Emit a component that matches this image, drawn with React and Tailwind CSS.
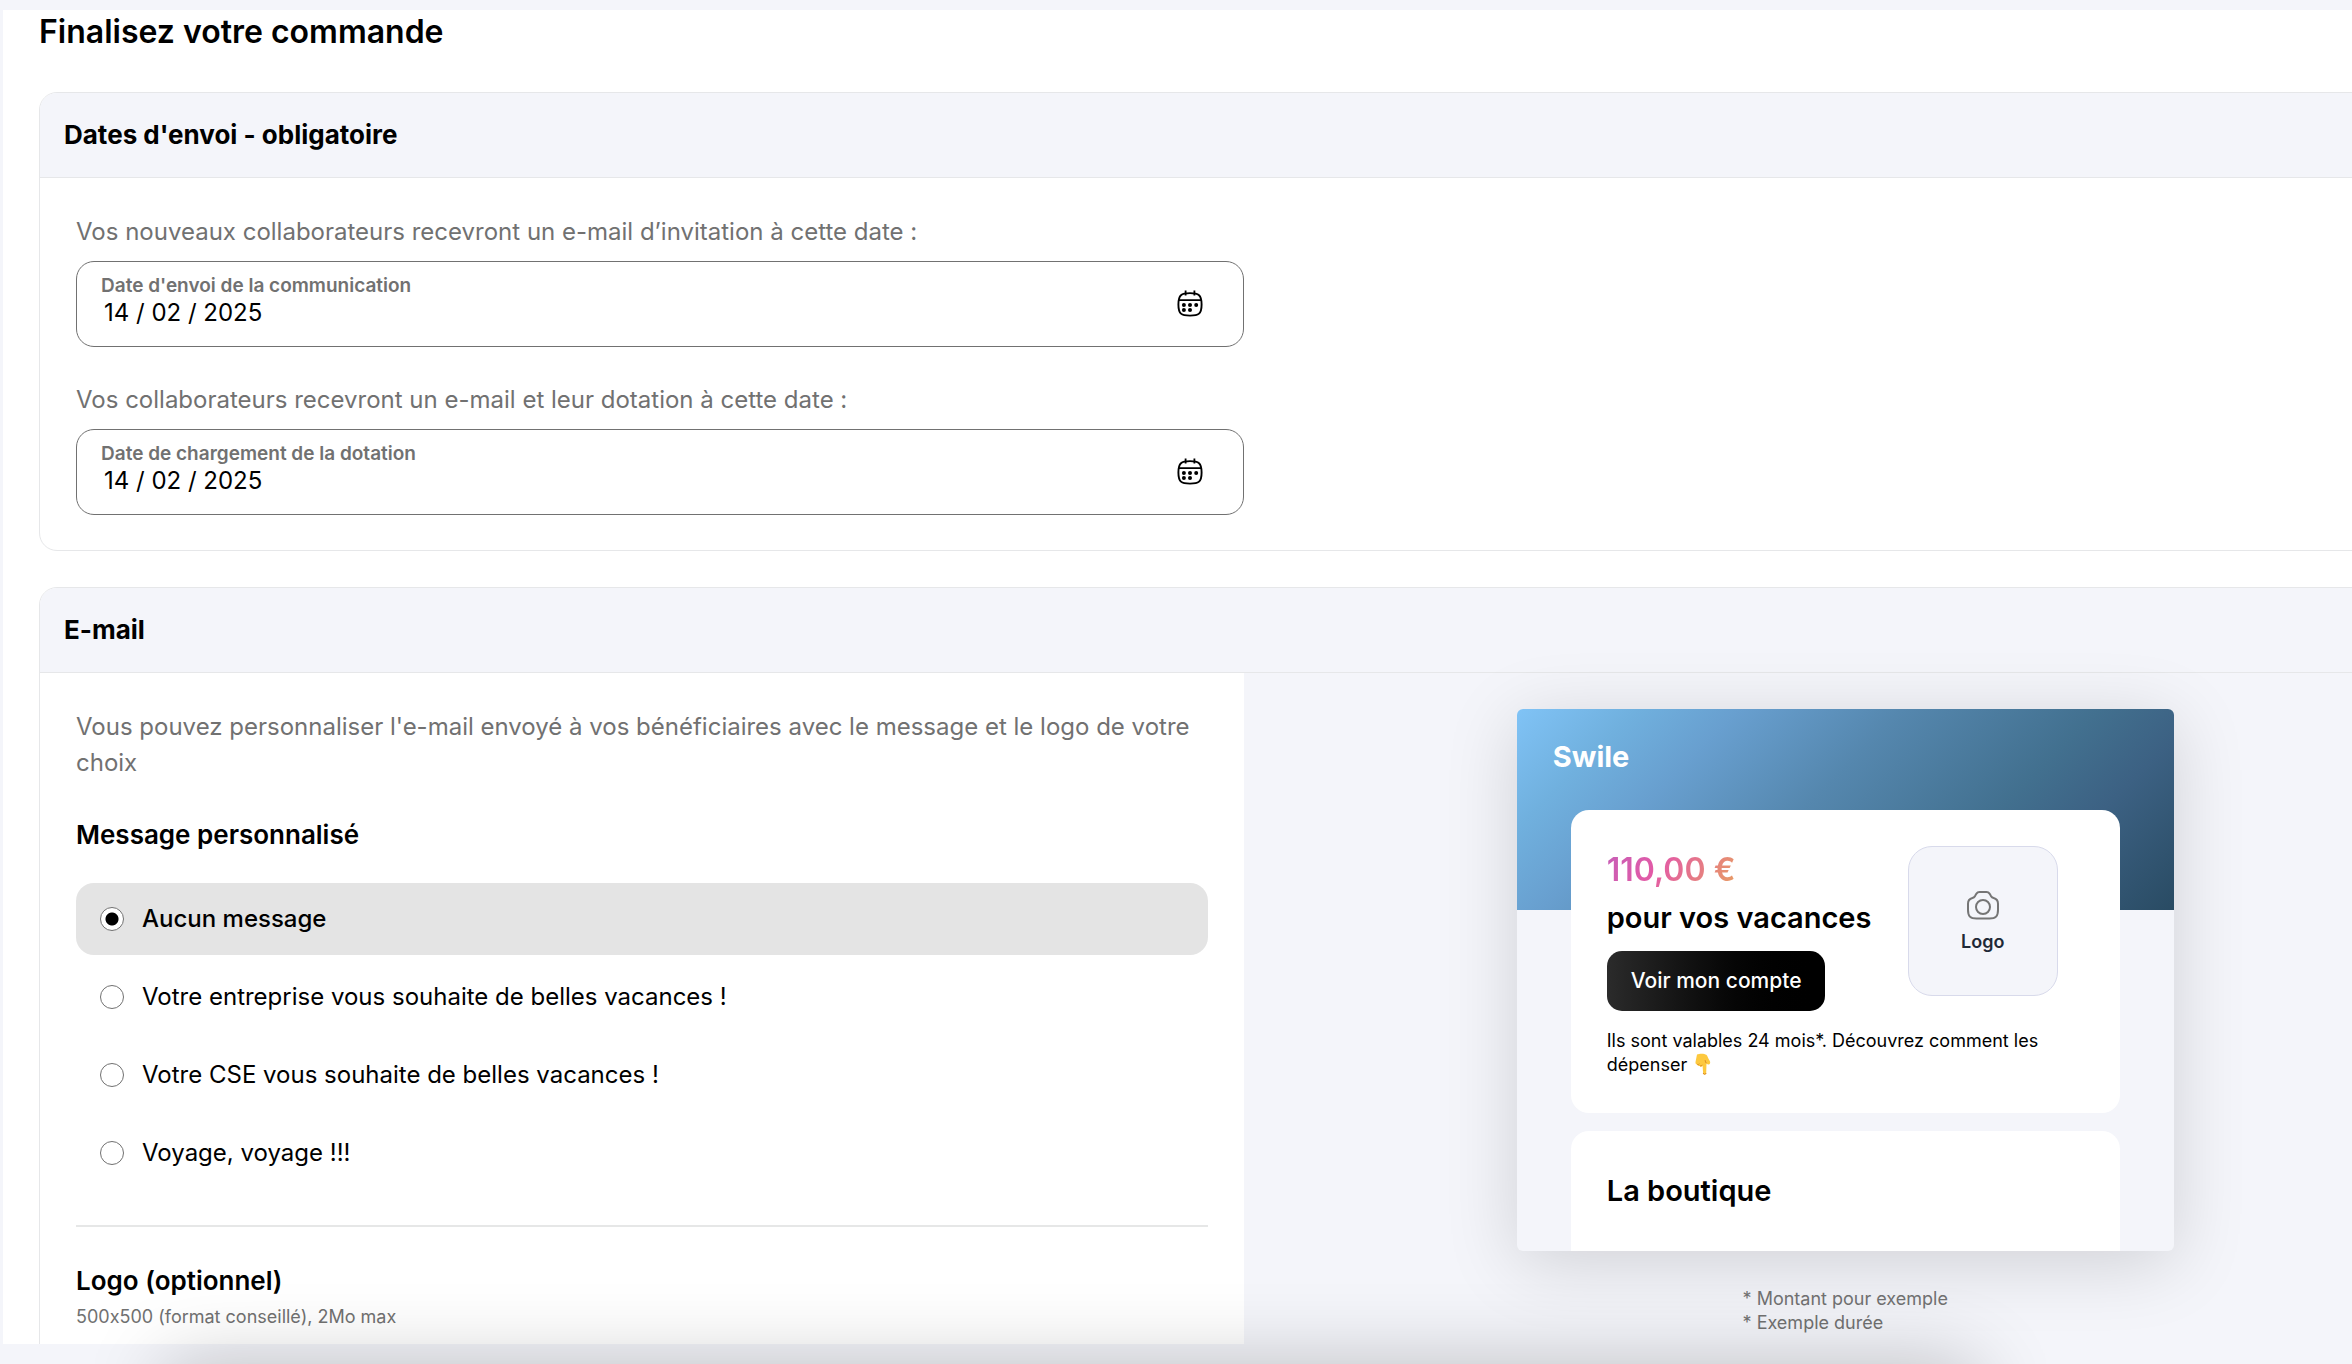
import { useState } from "react";

const dates = [
  {
    id: "sendDate",
    hint: "Vos nouveaux collaborateurs recevront un e-mail d’invitation à cette date :",
    label: "Date d'envoi de la communication",
  },
  {
    id: "loadDate",
    hint: "Vos collaborateurs recevront un e-mail et leur dotation à cette date :",
    label: "Date de chargement de la dotation",
  },
];

const messages = [
  { value: "none", label: "Aucun message" },
  { value: "company", label: "Votre entreprise vous souhaite de belles vacances !" },
  { value: "cse", label: "Votre CSE vous souhaite de belles vacances !" },
  { value: "trip", label: "Voyage, voyage !!!" },
];

function CalendarIcon() {
  return (
    <svg width="28" height="28" viewBox="0 0 28 28" fill="none" aria-hidden="true">
      <path
        d="M14 4.1c8.6 0 11.6 1.8 11.6 11.4S22.6 26.6 14 26.6 2.4 25.1 2.4 15.5 5.4 4.1 14 4.1Z"
        stroke="currentColor"
        strokeWidth="1.9"
      />
      <path d="M3 11.2h22M9.6 1.5v5M18.4 1.5v5" stroke="currentColor" strokeWidth="1.8" />
      <g fill="currentColor">
        <circle cx="7.9" cy="16" r="2" />
        <circle cx="14" cy="16" r="2" />
        <circle cx="20.2" cy="16" r="2" />
        <circle cx="7.9" cy="21" r="2" />
        <circle cx="14" cy="21" r="2" />
      </g>
    </svg>
  );
}

function CameraIcon() {
  return (
    <svg
      width="34"
      height="30"
      viewBox="0 0 34 30"
      fill="none"
      stroke="#757575"
      strokeWidth="2"
      strokeLinejoin="round"
      aria-hidden="true"
    >
      <path d="M13.5 2h7c1.4 0 2.3.5 3 1.6l1.5 2.5c.7 1.1 1.4 1.6 2.6 1.9 3.2.8 4.4 2.6 4.4 5.8v6.2c0 6.3-2.2 8.5-8.5 8.5h-13C4.2 28.5 2 26.3 2 20v-6.200C2 10.6 3.2 8.8 6.4 8c1.2-.3 1.9-.8 2.6-1.9l1.5-2.5c.7-1.1 1.6-1.6 3-1.6Z" />
      <circle cx="17" cy="17" r="7" />
    </svg>
  );
}

function PointDownIcon() {
  return (
    <svg
      className="inline-block ml-0.5 align-text-bottom"
      width="18"
      height="22"
      viewBox="0 0 18 22"
      role="img"
      aria-label="ci-dessous"
    >
      <path
        d="M3 1.5C5.5.3 10.5.3 12.3 1.8c1.4 1.2 1.6 3.5 3.2 5.6.9 1.3 1 3-.1 3.8-1 .6-2.2.2-2.9-.7l-.3 9.7c-.1 1.7-3 1.7-3.1 0L8.6 13c-.9 1-2.3 1-2.900-.1-1.2.5-2.2-.1-2.5-1.3C1.5 11.5 1.3 10 1.6 8.5Z"
        fill="#fdc93f"
      />
      <path
        d="M3.2 11.3c.7.5 1.6.3 2.2-.5M5.8 12.6c1 .5 2 .2 2.6-.8M12.3 10.2c-.6-.8-1-1.9-1.2-3M9.2 20c.2 1.7 2.7 1.7 2.9 0"
        stroke="#d98a25"
        strokeWidth="1"
        fill="none"
      />
    </svg>
  );
}

function Section({ title, children }) {
  return (
    <section className="rounded-[18px] border border-[#e6e7e9] overflow-hidden">
      <h2 className="h-[85px] flex items-center px-6 bg-[#f4f5fa] border-b border-[#e6e7e9] text-[26px] leading-9 font-bold">
        {title}
      </h2>
      {children}
    </section>
  );
}

function DateField({ id, hint, label }) {
  const [value, setValue] = useState("14 / 02 / 2025");

  return (
    <div className="flex flex-col gap-[11px]">
      <p className="text-2xl leading-9 text-[#717171]">{hint}</p>
      <div className="h-[86px] flex items-center justify-between rounded-[18px] border border-[#717171] pl-6 pr-[39px] pb-1.5">
        <div className="flex-1 flex flex-col">
          <label htmlFor={id} className="text-[19px] leading-6 font-semibold text-[#717171]">
            {label}
          </label>
          <input
            id={id}
            type="text"
            value={value}
            onChange={(e) => setValue(e.target.value)}
            className="w-full px-[3px] text-2xl leading-[30px] outline-none"
          />
        </div>
        <button type="button" aria-label="Ouvrir le calendrier" className="pt-1">
          <CalendarIcon />
        </button>
      </div>
    </div>
  );
}

function MessagePicker() {
  const [message, setMessage] = useState("none");

  return (
    <fieldset className="mt-9">
      <legend className="text-[26px] leading-9 font-semibold">Message personnalisé</legend>
      <div className="mt-[30px] flex flex-col gap-1.5">
        {messages.map((m) => (
          <label
            key={m.value}
            className={`h-[72px] flex items-center gap-[18px] px-6 rounded-[18px] text-2xl cursor-pointer ${
              message === m.value ? "bg-[#e4e4e4] font-medium" : ""
            }`}
          >
            <input
              type="radio"
              name="message"
              value={m.value}
              checked={message === m.value}
              onChange={() => setMessage(m.value)}
              className="appearance-none size-6 rounded-full border border-[#717171] bg-white checked:bg-[radial-gradient(circle,#000_6px,#fff_7px)]"
            />
            {m.label}
          </label>
        ))}
      </div>
    </fieldset>
  );
}

function EmailPreview() {
  return (
    <div className="w-[657px] h-[542px] rounded-md overflow-hidden bg-[#f4f5fa] shadow-[0_12px_72px_rgba(0,0,0,0.15)]">
      <div className="h-[201px] px-9 pt-[30px] bg-[linear-gradient(135deg,#80c3f6_0%,#70b0de_14%,#689fcf_26%,#5587ae_45%,#42708f_68%,#3c6183_80%,#294b63_100%)]">
        <p className="text-[29px] leading-9 font-bold text-white">Swile</p>
      </div>
      <div className="-mt-[100px] px-[54px] flex flex-col gap-[18px]">
        <div className="h-[303px] rounded-[18px] bg-white p-9">
          <div className="flex gap-9">
            <div className="w-[265px]">
              <p className="w-fit text-[32px] leading-12 font-semibold text-transparent bg-clip-text bg-[linear-gradient(120deg,#c55fb8_0%,#e35aa6_40%,#e8a060_100%)]">
                110,00 €
              </p>
              <p className="text-[29px] leading-12 font-semibold whitespace-nowrap">pour vos vacances</p>
              <button
                type="button"
                className="mt-[9px] h-[60px] px-6 rounded-[15px] bg-linear-to-r from-[#2b2b2b] to-black text-[21px] font-medium text-white whitespace-nowrap"
              >
                Voir mon compte
              </button>
            </div>
            <div className="size-[150px] flex flex-col items-center justify-center gap-2.5 rounded-3xl border border-[#d8daeb] bg-[#f4f5fa] pt-0.5">
              <CameraIcon />
              <span className="text-[18px] leading-6 font-semibold text-[#1f2937]">Logo</span>
            </div>
          </div>
          <p className="mt-[18px] text-[18px] leading-6">
            Ils sont valables 24 mois*. Découvrez comment les dépenser <PointDownIcon />
          </p>
        </div>
        <div className="h-36 rounded-t-[18px] bg-white p-9">
          <h3 className="text-[29px] leading-12 font-semibold">La boutique</h3>
        </div>
      </div>
    </div>
  );
}

export default function App() {
  return (
    <div className="relative h-screen overflow-hidden bg-[#f4f5fa] pt-[10px] pb-5 pl-[3px] font-['Inter',sans-serif] text-black">
      <main className="h-full overflow-hidden bg-white pl-9">
        <h1 className="text-[32px] leading-11 font-semibold">Finalisez votre commande</h1>

        {/* the sections run past the right edge of the window */}
        <div className="mt-[38px] -mr-24 flex flex-col gap-9">
          <Section title="Dates d'envoi - obligatoire">
            <div className="w-1/2 pt-9 pb-[35px] pl-9 flex flex-col gap-[35px]">
              {dates.map((d) => (
                <DateField key={d.id} {...d} />
              ))}
            </div>
          </Section>

          <Section title="E-mail">
            <div className="grid grid-cols-2">
              <div className="p-9">
                <p className="text-2xl leading-9 text-[#717171]">
                  Vous pouvez personnaliser l'e-mail envoyé à vos bénéficiaires avec le message et le
                  logo de votre choix
                </p>
                <MessagePicker />
                <hr className="my-9 border-t-2 border-[#e6e7e7]" />
                <h3 className="text-[26px] leading-9 font-semibold">Logo (optionnel)</h3>
                {/* calt off, or Inter turns the x into a multiplication sign */}
                <p className="mt-1.5 text-[18px] leading-6 text-[#717171] [font-feature-settings:'calt'_0]">
                  500x500 (format conseillé), 2Mo max
                </p>
              </div>

              <div className="flex flex-col items-center gap-9 bg-[#f4f5fa] py-9">
                <EmailPreview />
                <div className="text-[18px] leading-6 text-[#717171]">
                  <p>* Montant pour exemple</p>
                  <p>* Exemple durée</p>
                </div>
              </div>
            </div>
          </Section>
        </div>
      </main>

      {/* shadow of the bar docked below the window */}
      <div className="absolute top-full left-[7%] right-[16%] h-24 shadow-[0_0_80px_rgba(0,0,0,0.23)]" />
    </div>
  );
}
